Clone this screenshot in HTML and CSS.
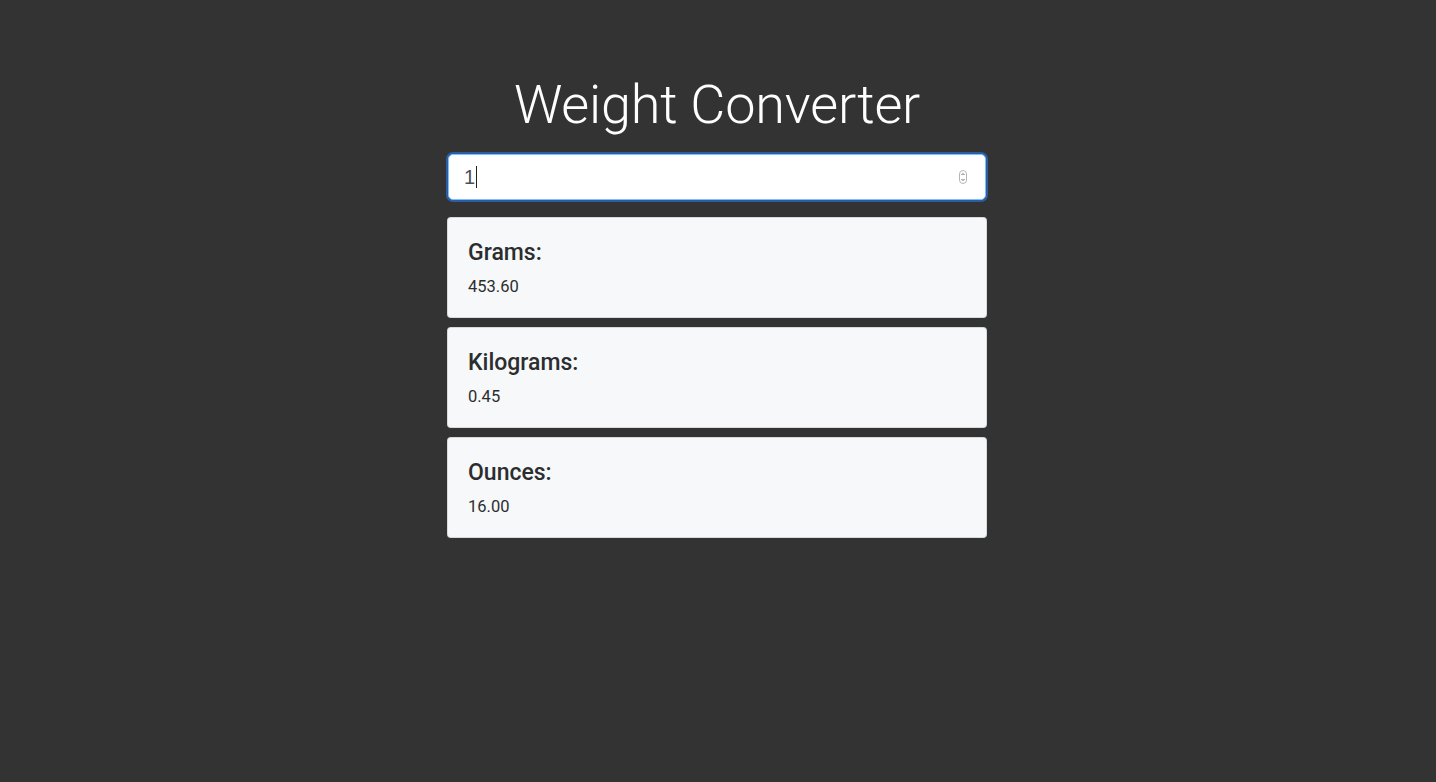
FILE: index.html
```html
<!DOCTYPE html>
<html lang="en">
<head>
<meta charset="utf-8">
<title>Weight Converter</title>
<link rel="stylesheet" href="styles.css">
</head>
<body>
<main class="container">
  <h1 class="title">Weight Converter</h1>
  <div class="field">
    <span class="field-value">1</span><span class="caret"></span>
    <span class="spinner">
      <svg width="8" height="14" viewBox="0 0 8 14"><rect x="0.5" y="0.5" width="7" height="13" rx="3.5" fill="#fff" stroke="#b5b5b5"/><path d="M2.5 5 L4 3.5 L5.5 5 M2.5 9 L4 10.5 L5.5 9" fill="none" stroke="#555" stroke-width="0.9"/></svg>
    </span>
  </div>
  <section class="card">
    <h4 class="card-title">Grams:</h4>
    <div class="card-text">453.60</div>
  </section>
  <section class="card">
    <h4 class="card-title">Kilograms:</h4>
    <div class="card-text">0.45</div>
  </section>
  <section class="card">
    <h4 class="card-title">Ounces:</h4>
    <div class="card-text">16.00</div>
  </section>
</main>
</body>
</html>
```
FILE: styles.css
```css
html, body {
  margin: 0;
  padding: 0;
  background: #333333;
  height: 100%;
}
body {
  font-family: Roboto, "Liberation Sans", Arial, sans-serif;
  color: #212529;
  padding-right: 2px;
}
.container {
  width: 540px;
  margin: 0 auto;
  padding-top: 71px;
  display: flex;
  flex-direction: column;
}
.title {
  margin: 0 0 16px 0;
  font-family: Roboto, "Liberation Sans", sans-serif;
  font-weight: 300;
  font-size: 54px;
  line-height: 67px;
  color: #ffffff;
  text-align: center;
  letter-spacing: -0.2px;
}
.field {
  height: 46px;
  box-sizing: border-box;
  border: 1px solid #80bdff;
  border-radius: 5px;
  background: #fff;
  box-shadow: 0 0 0 2px rgba(40, 110, 200, 0.75);
  display: flex;
  align-items: center;
  padding: 0 18px 0 15px;
  margin: 0 1px 17px 1px;
  font-family: "Liberation Sans", Arial, sans-serif;
  font-size: 20px;
}
.field-value {
  color: #495057;
}
.caret {
  width: 1px;
  height: 22px;
  background: #222;
  margin-left: 1px;
}
.spinner {
  margin-left: auto;
  display: flex;
}
.card {
  box-sizing: border-box;
  height: 101px;
  background: #f7f8fa;
  border: 1px solid rgba(0,0,0,0.125);
  border-radius: 4px;
  padding: 21px 20px 19px 20px;
  margin-bottom: 9px;
}
.card-title {
  margin: 0 0 8px 0;
  font-size: 23px;
  font-weight: 500;
  line-height: 28px;
  color: #2b2d2f;
}
.card-text {
  font-size: 16.5px;
  line-height: 24px;
  color: #2b2d2f;
}
```
